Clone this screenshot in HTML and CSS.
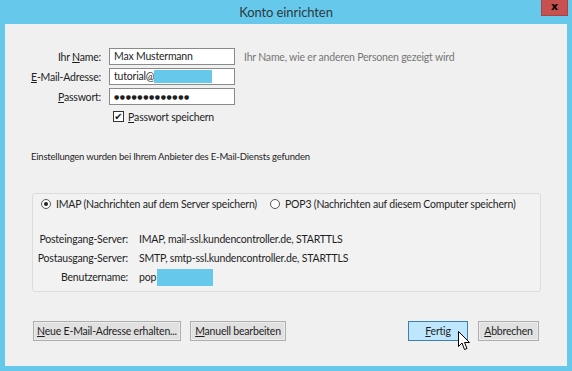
FILE: index.html
```html
<!DOCTYPE html>
<html lang="de">
<head>
  <meta charset="UTF-8" />
  <title>Konto einrichten</title>
  <link rel="stylesheet" href="styles.css">
</head>
<body>
  <div class="window">
    <div class="titlebar">
      <span class="title">Konto einrichten</span>
      <span class="close">x</span>
    </div>
    <div class="content">
      <div class="form">
        <label class="lbl">Ihr <u>N</u>ame:</label>
        <div class="input">Max Mustermann</div>
        <div class="hint">Ihr Name, wie er anderen Personen gezeigt wird</div>

        <label class="lbl"><u>E</u>-Mail-Adresse:</label>
        <div class="input">tutorial@<span class="blur"></span></div>
        <div></div>

        <label class="lbl"><u>P</u>asswort:</label>
        <div class="input dots">&#9679;&#9679;&#9679;&#9679;&#9679;&#9679;&#9679;&#9679;&#9679;&#9679;&#9679;&#9679;&#9679;</div>
        <div></div>

        <div></div>
        <div class="check"><span class="box">&#10004;</span><u>P</u>asswort speichern</div>
        <div></div>
      </div>

      <p class="found">Einstellungen wurden bei Ihrem Anbieter des E-Mail-Diensts gefunden</p>

      <div class="group">
        <div class="radios">
          <span class="radio on"></span>
          <span class="rtext">IMAP (Nachrichten auf dem Server speichern)</span>
          <span class="radio"></span>
          <span class="rtext">POP3 (Nachrichten auf diesem Computer speichern)</span>
        </div>
        <div class="servers">
          <span class="slbl">Posteingang-Server:</span>
          <span>IMAP, mail-ssl.kundencontroller.de, STARTTLS</span>
          <span class="slbl">Postausgang-Server:</span>
          <span>SMTP, smtp-ssl.kundencontroller.de, STARTTLS</span>
          <span class="slbl">Benutzername:</span>
          <span>pop<span class="blur user"></span></span>
        </div>
      </div>

      <div class="buttons">
        <button class="btn wide"><u>N</u>eue E-Mail-Adresse erhalten...</button>
        <button class="btn mid"><u>M</u>anuell bearbeiten</button>
        <span class="spacer"></span>
        <button class="btn primary"><u>F</u>ertig</button>
        <button class="btn cancel"><u>A</u>bbrechen</button>
      </div>
    </div>
    <svg class="cursor" width="13" height="20" viewBox="0 0 13 20">
      <path d="M0.5 0.5 L0.5 15.5 L4 12 L6.5 18.5 L9 17.5 L6.5 11.5 L11.5 11.5 Z" fill="#fff" stroke="#000" stroke-width="1"/>
    </svg>
  </div>
</body>
</html>
```

FILE: styles.css
```css
html, body {
  margin: 0;
  padding: 0;
  height: 100%;
  overflow: hidden;
}

body {
  background: #66c9ec;
  font-family: Lato, "Liberation Sans", sans-serif;
  font-size: 10.5px;
  letter-spacing: -0.2px;
  color: #1e1e1e;
}

.window {
  position: relative;
  width: 572px;
  height: 371px;
}

.titlebar {
  height: 24px;
  display: flex;
  justify-content: center;
  align-items: center;
  position: relative;
}

.title {
  font-size: 13px;
  letter-spacing: -0.1px;
  color: #2b3a40;
  margin-top: -1px;
}

.close {
  position: absolute;
  top: 0;
  right: 4px;
  width: 27px;
  height: 16px;
  background: #c75050;
  border: 1px solid #a54545;
  border-top: none;
  box-sizing: border-box;
  color: #000;
  font-weight: bold;
  font-size: 11px;
  line-height: 14px;
  text-align: center;
  letter-spacing: 0;
  font-family: "DejaVu Sans", sans-serif;
}

.content {
  margin: 0 5px;
  height: 342px;
  background: #f0f0f0;
  box-sizing: border-box;
  padding-top: 24px;
  display: flex;
  flex-direction: column;
}

.form {
  display: grid;
  grid-template-columns: 96px 126px auto;
  column-gap: 8px;
  row-gap: 3px;
  align-items: center;
}

.lbl {
  text-align: right;
  white-space: nowrap;
}

.input {
  height: 17px;
  box-sizing: border-box;
  background: #fff;
  border: 1px solid #8a8a8a;
  padding-left: 4px;
  line-height: 15px;
  display: flex;
  align-items: center;
  white-space: nowrap;
}

.dots {
  font-size: 6px;
  letter-spacing: 0.6px;
  font-family: "DejaVu Sans", sans-serif;
}

.blur {
  display: inline-block;
  width: 58px;
  height: 13px;
  background: #66c9ec;
}

.hint {
  color: #777;
  margin-left: 1px;
  white-space: nowrap;
}

.check {
  display: flex;
  align-items: center;
  height: 17px;
  padding-left: 4px;
  white-space: nowrap;
}

.box {
  width: 11px;
  height: 11px;
  border: 1px solid #333;
  box-sizing: border-box;
  background: #fff;
  font-size: 10px;
  line-height: 9px;
  text-align: center;
  margin-right: 4px;
  letter-spacing: 0;
  font-family: "DejaVu Sans", sans-serif;
}

.found {
  margin: 24px 0 0 26px;
  height: 16px;
  line-height: 16px;
  font-size: 9.5px;
  white-space: nowrap;
}

.group {
  margin: 28px 0 0 27px;
  width: 509px;
  height: 99px;
  box-sizing: border-box;
  border: 1px solid #dcdcdc;
  border-radius: 3px;
  background: #f2f2f2;
  padding: 2px 0 0 8px;
}

.radios {
  display: flex;
  align-items: center;
  height: 16px;
  white-space: nowrap;
}

.radio {
  flex: none;
  width: 10px;
  height: 10px;
  border: 1px solid #555;
  border-radius: 50%;
  box-sizing: border-box;
  background: #fff;
  margin-right: 5px;
  position: relative;
}

.radio.on::after {
  content: "";
  position: absolute;
  left: 2px;
  top: 2px;
  width: 4px;
  height: 4px;
  border-radius: 50%;
  background: #222;
}

.rtext {
  margin-right: 13px;
}

.servers {
  display: grid;
  grid-template-columns: 87px auto;
  column-gap: 11px;
  row-gap: 2px;
  margin-top: 19px;
  align-items: center;
  white-space: nowrap;
}

.servers > span {
  height: 17px;
  line-height: 17px;
  display: flex;
  align-items: center;
}

.slbl {
  justify-content: flex-end;
}

.user {
  width: 56px;
  height: 17px;
  margin-left: 1px;
}

.buttons {
  display: flex;
  margin: 29px 0 0 28px;
  width: 506px;
  gap: 9px;
}

.spacer {
  flex: 1;
}

.btn {
  height: 20px;
  padding: 0;
  font-family: inherit;
  font-size: 10.5px;
  letter-spacing: -0.2px;
  color: #1e1e1e;
  background: #e1e1e1;
  border: 1px solid #adadad;
  box-shadow: inset 0 0 0 1px #ececec;
  white-space: nowrap;
}

.wide {
  width: 148px;
}

.mid {
  width: 96px;
}

.primary {
  width: 60px;
  background: #bee6fd;
  border-color: #3c7fb1;
  box-shadow: none;
  margin-right: 1px;
}

.cancel {
  width: 61px;
}

.cursor {
  position: absolute;
  left: 458px;
  top: 331px;
}
```
